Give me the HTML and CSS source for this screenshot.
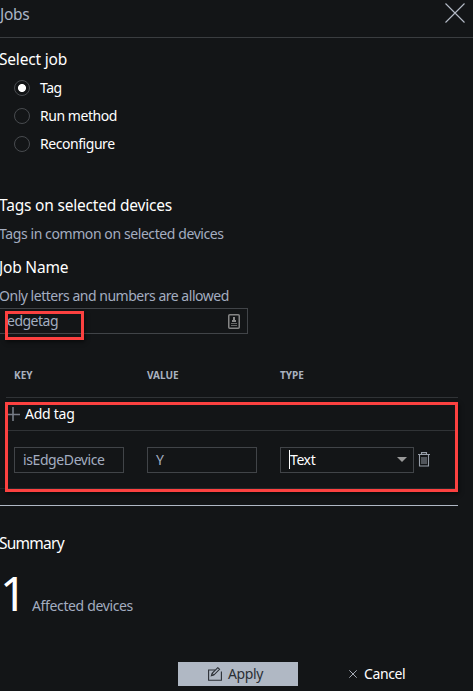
FILE: index.html
```html
<!DOCTYPE html>
<html lang="en">
<head>
<meta charset="utf-8">
<title>Jobs</title>
<link rel="stylesheet" href="styles.css">
</head>
<body>
<div class="flyout">
  <header class="header">
    <span class="header-title">Jobs</span>
    <svg class="close" width="20" height="20" viewBox="0 0 20 20"><path d="M.5.5l19 19M19.5.5l-19 19"/></svg>
  </header>
  <main>
    <h2 class="title select-title">Select job</h2>
    <div class="radios">
      <label class="radio"><span class="dot checked"></span><span>Tag</span></label>
      <label class="radio"><span class="dot"></span><span>Run method</span></label>
      <label class="radio"><span class="dot"></span><span>Reconfigure</span></label>
    </div>
    <h2 class="title tags-title">Tags on selected devices</h2>
    <p class="desc tags-desc">Tags in common on selected devices</p>
    <h2 class="title name-title">Job Name</h2>
    <p class="desc name-desc">Only letters and numbers are allowed</p>
    <div class="name-field">
      <span class="name-value">edgetag</span>
      <svg width="12" height="15" viewBox="0 0 12 15"><rect x=".75" y=".75" width="10.5" height="13.5" rx="1" fill="none" stroke="#858585" stroke-width="1.5"/><path d="M5 3h2v3h1v2H4V6h1z" fill="#8a8a8a"/><path d="M3 9h6v1H3zM3 11h6v1H3z" fill="#666"/></svg>
      <div class="mark mark-name"></div>
    </div>
    <section class="table">
      <div class="thead"><span>Key</span><span>Value</span><span>Type</span></div>
      <div class="add">
        <svg width="13" height="15" viewBox="0 0 13 15"><path d="M0 7.5h13M6 0v14" stroke="#777d88" stroke-width="1.6"/></svg>
        <span>Add tag</span>
      </div>
      <div class="row">
        <div class="field">isEdgeDevice</div>
        <div class="field">Y</div>
        <div class="field select"><span class="caret"></span><span>Text</span><span class="arrow"></span></div>
        <svg class="trash" width="12" height="15" viewBox="0 0 12 15"><path d="M0 2.5h12M3.5 2V.6h5V2M1.5 3v11h9V3" fill="none" stroke="#989fa9" stroke-width="1.1"/><path d="M4 5v7M6 5v7M8 5v7" stroke="#848a93" stroke-width="1.1"/></svg>
      </div>
      <div class="mark mark-table"></div>
    </section>
    <section class="summary">
      <h2 class="title summary-title">Summary</h2>
      <div class="count-row"><span class="count">1</span><span class="affected">Affected devices</span></div>
    </section>
    <footer class="actions">
      <div class="apply">
        <svg width="14" height="14" viewBox="0 0 14 14" fill="none" stroke="#2b2f35" stroke-width="1.1"><path d="M7 3H.6v10.2h12.8V4.5"/><path d="M3.3 8.8l.8-2.5L9.8.7l1.7 1.6-5.7 5.8zM4.1 6.4l1.7 1.7"/></svg>
        <span>Apply</span>
      </div>
      <div class="cancel">
        <svg width="8" height="8" viewBox="0 0 8 8"><path d="M.3.3l7.4 7.4M7.7.3L.3 7.7" stroke="#a5abb6"/></svg>
        <span>Cancel</span>
      </div>
    </footer>
  </main>
</div>
</body>
</html>
```
FILE: styles.css
```css
* { box-sizing: border-box; }
body {
  margin: 0;
  background: #131517;
  color: #fff;
  font: 14px/20px "Noto Sans", "Open Sans", sans-serif;
  letter-spacing: -.4px;
  white-space: nowrap;
}
.flyout { width: 473px; height: 691px; overflow: hidden; }
.header {
  height: 38px;
  padding: 3px 8px 0 0;
  border-bottom: 1px solid #3a3d40;
  display: flex;
  justify-content: space-between;
}
.header-title { padding-top: 1px; font-size: 15.5px; letter-spacing: -.3px; color: #aab4c6; }
.close path { stroke: #b5bbc7; stroke-width: 1.1; }
.title { margin: 0 0 0 -1px; font-size: 15.5px; font-weight: 400; line-height: 20px; letter-spacing: -.2px; }
.select-title { margin-top: 11px; }
.radios { margin-top: 5px; padding-left: 14px; }
.radio { height: 28px; display: flex; align-items: center; gap: 10px; letter-spacing: -.45px; }
.dot {
  width: 16px;
  height: 16px;
  border: 1px solid #484b4f;
  border-radius: 50%;
}
.dot.checked { background: radial-gradient(circle, #fff 3.6px, transparent 4.4px); }
.tags-title { margin-top: 37px; }
.desc { margin: 9px 0 0 -1px; color: #a3adc0; letter-spacing: -.41px; }
.name-desc { letter-spacing: -.48px; }
.name-title { margin-top: 13px; }
.name-field {
  position: relative;
  width: 248px;
  height: 26px;
  margin-top: 2px;
  padding: 0 7px 0 7px;
  border: 1px solid #414448;
  border-left: 0;
  display: flex;
  align-items: center;
  justify-content: space-between;
  color: #a3adc0;
}
.name-value { letter-spacing: -.5px; }
.mark {
  position: absolute;
  border: 3px solid #fc4140;
  box-shadow: 1px 2px 4px #0008;
}
.mark-name { left: 5px; top: 2px; width: 79px; height: 29px; }
.table { position: relative; width: 458px; height: 172px; border-bottom: 1px solid #b0b8c5; }
.thead {
  height: 64px;
  margin-left: 6px;
  padding: 31px 0 0 8px;
  border-bottom: 1px solid #303336;
  display: grid;
  grid-template-columns: 133px 133px 1fr;
  font-size: 10px;
  font-weight: 700;
  letter-spacing: 0;
  text-transform: uppercase;
  color: #a9b1bf;
}
.add {
  height: 33px;
  margin-left: 6px;
  padding-left: 1px;
  border-bottom: 1px solid #303336;
  display: flex;
  align-items: center;
  gap: 5px;
  letter-spacing: -.25px;
}
.row {
  height: 58px;
  padding-left: 14px;
  border-bottom: 1px solid #24272a;
  display: flex;
  align-items: center;
  gap: 23px;
}
.field {
  width: 110px;
  height: 26px;
  padding: 0 8px;
  border: 1px solid #414448;
  line-height: 24px;
  color: #a3adc0;
}
.select { width: 134px; display: flex; align-items: center; color: #fff; }
.caret { width: 1px; height: 19px; background: #fff; }
.arrow {
  margin-left: auto;
  margin-right: -2px;
  border: 5px solid transparent;
  border-top-color: #999;
  border-bottom: 0;
}
.trash { margin-left: -19px; }
.mark-table { left: 5px; top: 68px; width: 453px; height: 90px; }
.summary { padding-top: 27px; height: 156px; }
.summary-title { letter-spacing: -.75px; }
.count-row { display: flex; align-items: baseline; height: 60px; margin-top: 8px; }
.count { width: 32px; font-size: 47px; line-height: 64px; }
.affected { color: #a3adc0; letter-spacing: -.36px; }
.actions { display: flex; height: 24px; padding-left: 178px; }
.apply {
  width: 120px;
  background: #b0b8c4;
  color: #2b2f35;
  display: flex;
  align-items: center;
  padding-left: 30px;
  gap: 6px;
}
.cancel { margin-left: 51px; display: flex; align-items: center; gap: 7px; }
```
